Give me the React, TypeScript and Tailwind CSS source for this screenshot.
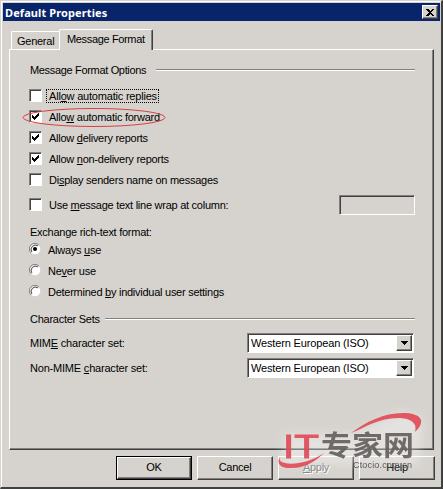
import type { ReactNode } from "react";

const raised =
  "border border-t-white border-l-white border-r-[#404040] border-b-[#404040] shadow-[inset_-1px_-1px_0_#808080]";
const sunken =
  "border border-t-[#808080] border-l-[#808080] border-r-white border-b-white shadow-[inset_1px_1px_0_#404040]";

function CheckRow({
  children,
  checked,
  focused,
}: {
  children: ReactNode;
  checked?: boolean;
  focused?: boolean;
}) {
  return (
    <label className="flex h-[21px] items-center">
      <span className={`flex size-[13px] shrink-0 items-center justify-center bg-white ${sunken}`}>
        {checked && (
          <svg width="9" height="9" viewBox="0 0 9 9" shapeRendering="crispEdges">
            <path d="M1 3h1v1h1v1h1v-1h1v-1h1v-1h1v-1h1v3h-1v1h-1v1h-1v1h-1v1h-1v-1h-1v-1h-1z" />
          </svg>
        )}
      </span>
      <span
        className={`ml-1 flex h-[14px] items-center border border-dotted pt-[2px] pr-px pl-[2px] whitespace-nowrap ${
          focused ? "border-black tracking-[-0.2px]" : "border-transparent"
        }`}
      >
        <span>{children}</span>
      </span>
    </label>
  );
}

function RadioRow({ children, checked }: { children: ReactNode; checked?: boolean }) {
  return (
    <label className="flex h-[21px] items-center">
      <svg width="13" height="13" viewBox="0 0 13 13" className="mr-[6px] shrink-0">
        <circle cx="6" cy="6" r="5.3" fill="#fff" />
        <path d="M2 9.9A5.5 5.5 0 0 1 9.9 2" fill="none" stroke="#808080" />
        <path d="M2.8 8.9A4.4 4.4 0 0 1 8.9 2.8" fill="none" stroke="#404040" />
        {checked && <circle cx="6" cy="6" r="2" />}
      </svg>
      <span className="pt-px whitespace-nowrap">{children}</span>
    </label>
  );
}

function SectionTitle({ children, width }: { children: ReactNode; width: string }) {
  return (
    <div className="flex h-4 items-center">
      <span className={`shrink-0 pl-px whitespace-nowrap ${width}`}>{children}</span>
      <span className="h-[2px] flex-1 border-t border-b border-t-[#808080] border-b-white" />
    </div>
  );
}

function CharsetRow({ children }: { children: ReactNode }) {
  return (
    <div className="flex h-5 items-center">
      <span className="w-[218px] shrink-0 pl-px tracking-[-0.2px] whitespace-nowrap">{children}</span>
      <div className={`flex h-5 w-[167px] items-center justify-between bg-white p-px pl-[3px] ${sunken}`}>
        <span className="tracking-[-0.15px] whitespace-nowrap">Western European (ISO)</span>
        <span className={`flex h-4 w-4 items-center justify-center bg-[#d6d3ce] ${raised}`}>
          <svg width="7" height="4" viewBox="0 0 7 4" shapeRendering="crispEdges">
            <path d="M0 0h7L3.5 4z" />
          </svg>
        </span>
      </div>
    </div>
  );
}

function DialogButton({
  children,
  primary,
  disabled,
}: {
  children: ReactNode;
  primary?: boolean;
  disabled?: boolean;
}) {
  return (
    <button
      className={`h-6 w-[76px] ${primary ? "border border-black" : ""} ${
        disabled ? "text-[#848284] [text-shadow:1px_1px_0_#fff]" : ""
      }`}
    >
      <span className={`flex h-full items-center justify-center pb-px ${raised}`}>
        <span>{children}</span>
      </span>
    </button>
  );
}

function Watermark() {
  return (
    <svg
      className="absolute top-[405px] left-[270px] opacity-95"
      width="166"
      height="75"
      viewBox="0 0 166 75"
    >
      <defs>
        <filter id="halo" x="-20%" y="-20%" width="140%" height="140%">
          <feGaussianBlur stdDeviation="5" />
        </filter>
      </defs>
      <path d="M14 28H80L130 5L152 12L148 59H30L10 62Z" fill="#fff" opacity=".35" filter="url(#halo)" />
      <path
        d="M80 27C95 16 112 7 132 7C150 7 156 15 144 26C147 16 138 12 127 12C108 12 95 21 80 27Z"
        fill="#e0525e"
      />
      <path d="M9 51C6 55 7 62 18 62C32 63 44 56 53 47C38 57 22 59 14 57C9 56 8 54 9 51Z" fill="#e0525e" />
      <text
        x="12"
        y="52"
        fill="#e0525e"
        stroke="#e0525e"
        strokeWidth="1"
        letterSpacing="0"
        fontFamily="Liberation Sans, sans-serif"
        fontSize="33"
        textLength="36"
        lengthAdjust="spacingAndGlyphs"
      >
        IT
      </text>
      <text
        x="50"
        y="50"
        fill="#6b6665"
        letterSpacing="0"
        fontFamily="Noto Sans CJK SC, sans-serif"
        fontSize="28"
        fontWeight="700"
        textLength="93"
        lengthAdjust="spacingAndGlyphs"
      >
        专家网
      </text>
      <text
        x="82"
        y="62"
        fill="#55504f"
        letterSpacing="0"
        fontFamily="Liberation Sans, sans-serif"
        fontSize="9"
        textLength="59"
      >
        Ctocio.com.cn
      </text>
    </svg>
  );
}

export default function App() {
  return (
    <div className="relative flex h-[489px] w-[443px] flex-col border-t border-r-2 border-b-2 border-l border-t-[#d6d3ce] border-r-[#404040] border-b-[#404040] border-l-[#d6d3ce] bg-[#d6d3ce] font-['Liberation_Sans',Arial,sans-serif] text-[11px] leading-[13px] tracking-[-0.26px] text-black">
      <div className="flex flex-1 flex-col border-t border-l border-white pt-px pl-px">
        {/* Title bar */}
        <div className="mr-px flex h-[18px] items-center justify-between bg-[#08246b] px-[2px]">
          <span className="font-['Noto_Sans',sans-serif] text-[11px] font-bold tracking-[0.1px] whitespace-nowrap text-white">
            Default Properties
          </span>
          <button className={`flex h-[14px] w-4 items-center justify-center bg-[#d6d3ce] ${raised}`}>
            <svg width="8" height="7" viewBox="0 0 8 7" shapeRendering="crispEdges">
              <path d="M0 0h2l2 2 2-2h2L5 3.5 8 7H6L4 5 2 7H0l3-3.5z" />
            </svg>
          </button>
        </div>

        {/* Tabs */}
        <div className="mt-2 flex h-5 items-end pl-2">
          <div className="h-[18px] w-12 rounded-tl-xs border-t border-l border-white pt-[3px] pl-[5px]">
            General
          </div>
          <div className="relative -mb-px h-[21px] w-[94px] rounded-t-xs border-t border-r border-l border-t-white border-r-[#404040] border-l-white bg-[#d6d3ce] pt-[3px] pl-[7px] tracking-[-0.35px] whitespace-nowrap shadow-[inset_-1px_0_0_#808080]">
            Message Format
          </div>
        </div>

        {/* Tab page */}
        <div className={`ml-[6px] flex h-[401px] w-[425px] flex-col pt-3 pr-[18px] pl-[19px] ${raised}`}>
          <SectionTitle width="w-[127px] tracking-[-0.33px]">Message Format Options</SectionTitle>
          <div className="mt-[7px]">
            <CheckRow focused>
              All<u>o</u>w automatic replies
            </CheckRow>
            <CheckRow checked>
              Allo<u>w</u> automatic forward
            </CheckRow>
            <CheckRow checked>
              Allow <u>d</u>elivery reports
            </CheckRow>
            <CheckRow checked>
              Allow <u>n</u>on-delivery reports
            </CheckRow>
            <CheckRow>
              Di<u>s</u>play senders name on messages
            </CheckRow>
          </div>
          <div className="mt-1 flex items-center justify-between">
            <CheckRow>
              Use <u>m</u>essage text line wrap at column:
            </CheckRow>
            <span className={`h-5 w-[76px] ${sunken}`} />
          </div>
          <span className="mt-[11px] pl-px">Exchange rich-text format:</span>
          <RadioRow checked>
            Always <u>u</u>se
          </RadioRow>
          <RadioRow>
            Ne<u>v</u>er use
          </RadioRow>
          <RadioRow>
            Determined <u>b</u>y individual user settings
          </RadioRow>
          <div className="mt-[9px]">
            <SectionTitle width="w-[76px]">Character Sets</SectionTitle>
          </div>
          <div className="mt-[6px] flex flex-col gap-[5px]">
            <CharsetRow>
              MIM<u>E</u> character set:
            </CharsetRow>
            <CharsetRow>
              Non-MIME <u>c</u>haracter set:
            </CharsetRow>
          </div>
        </div>

        {/* Buttons */}
        <div className="mt-[6px] flex gap-[5px] pl-[113px]">
          <DialogButton primary>OK</DialogButton>
          <DialogButton>Cancel</DialogButton>
          <DialogButton disabled>
            <u>A</u>pply
          </DialogButton>
          <DialogButton>Help</DialogButton>
        </div>
      </div>

      {/* Highlight around the forwarding option */}
      <svg className="absolute top-[106px] left-[20px]" width="147" height="21" viewBox="0 0 147 21">
        <ellipse cx="73" cy="10.5" rx="71" ry="9" fill="none" stroke="#d63f45" />
      </svg>
      <Watermark />
    </div>
  );
}
